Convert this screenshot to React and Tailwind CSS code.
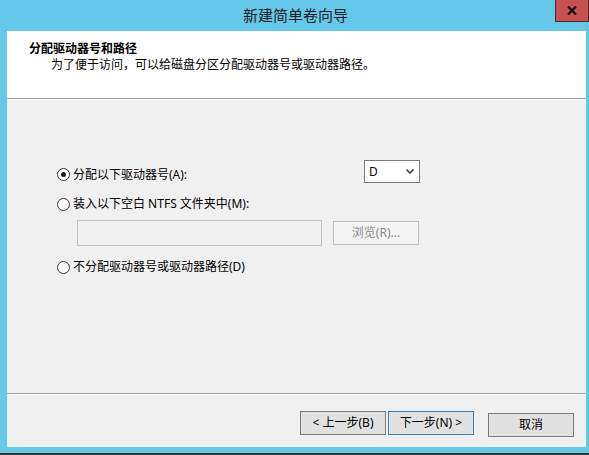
import React from 'react';

const font = { fontFamily: '"Noto Sans", "Noto Sans CJK SC", sans-serif' };

function Radio({ checked }) {
    return (
        <span className="w-[13px] h-[13px] rounded-full border border-[#333] bg-white flex items-center justify-center shrink-0">
            {checked && <span className="w-[5px] h-[5px] rounded-full bg-[#1a1a1a]"></span>}
        </span>
    );
}

function Button({ children, isDefault }) {
    return (
        <button
            className={
                isDefault
                    ? "w-[86px] h-[24px] border border-[#3c7fb1] bg-[#e1e1e1] text-[12px] text-black leading-none"
                    : "w-[86px] h-[24px] border border-[#7a7a7a] bg-[#e1e1e1] text-[12px] text-black leading-none"
            }
        >
            {children}
        </button>
    );
}

export default function App() {
    return (
        <div
            className="w-[589px] h-[455px] bg-[#64c8eb] flex flex-col relative overflow-hidden"
            style={font}
        >
            {/* title bar */}
            <div className="h-[31px] flex items-center justify-center text-[15px] text-[#1e1e1e] pl-[2px]">
                新建简单卷向导
            </div>
            <div className="absolute top-0 right-0 w-[34px] h-[22px] bg-[#c75050] border border-[#4a2a2a] border-t-0 flex items-center justify-center">
                <svg width="10" height="9" viewBox="0 0 10 9">
                    <path d="M1 0.5 L9 8.5 M9 0.5 L1 8.5" stroke="#111" strokeWidth="2.2" />
                </svg>
            </div>

            {/* client area */}
            <div className="ml-[7px] w-[579px] h-[416px] bg-[#f0f0f0] flex flex-col">
                {/* header */}
                <div className="h-[68px] bg-white border-b border-[#a0a0a0] pt-[10px] text-[12px] text-black">
                    <div className="pl-[22px] font-bold leading-[16px]">分配驱动器号和路径</div>
                    <div className="pl-[44px] leading-[15px]">为了便于访问，可以给磁盘分区分配驱动器号或驱动器路径。</div>
                </div>

                {/* body */}
                <div className="flex-1 border-t border-white border-b border-b-[#a0a0a0] pl-[50px] pt-[60px] text-[12px] text-black">
                    <div className="flex items-center h-[23px]">
                        <div className="w-[307px] flex items-center gap-[3px] mt-[6px]">
                            <Radio checked />
                            <span className="leading-[16px]">分配以下驱动器号(A):</span>
                        </div>
                        <div className="w-[56px] h-[23px] bg-white border border-[#7a7a7a] flex items-center justify-between pl-[4px] pr-[5px]">
                            <span className="leading-none">D</span>
                            <svg width="8" height="5" viewBox="0 0 8 5">
                                <path d="M0.5 0.5 L4 4 L7.5 0.5" stroke="#444" strokeWidth="1.6" fill="none" />
                            </svg>
                        </div>
                    </div>

                    <div className="flex items-center gap-[3px] h-[16px] mt-[13px]">
                        <Radio />
                        <span className="leading-[16px]">装入以下空白 NTFS 文件夹中(M):</span>
                    </div>

                    <div className="flex items-center gap-[11px] mt-[8px] pl-[20px]">
                        <div className="w-[245px] h-[26px] bg-[#f0f0f0] border border-[#c4c4c4]"></div>
                        <div className="w-[86px] h-[24px] bg-[#f4f4f4] border border-[#c0c0c0] flex items-center justify-center text-[#8a8a8a]">
                            浏览(R)...
                        </div>
                    </div>

                    <div className="flex items-center gap-[3px] h-[16px] mt-[13px]">
                        <Radio />
                        <span className="leading-[16px]">不分配驱动器号或驱动器路径(D)</span>
                    </div>
                </div>

                {/* footer */}
                <div className="h-[53px] border-t border-white flex items-start justify-end pt-[16px] pr-[12px]">
                    <div className="flex gap-[2px]">
                        <Button>&lt; 上一步(B)</Button>
                        <Button isDefault>下一步(N) &gt;</Button>
                    </div>
                    <div className="ml-[14px]">
                        <Button>取消</Button>
                    </div>
                </div>
            </div>

            <div className="flex-1"></div>
            <div className="h-[2px] bg-[#333]"></div>
        </div>
    );
}
